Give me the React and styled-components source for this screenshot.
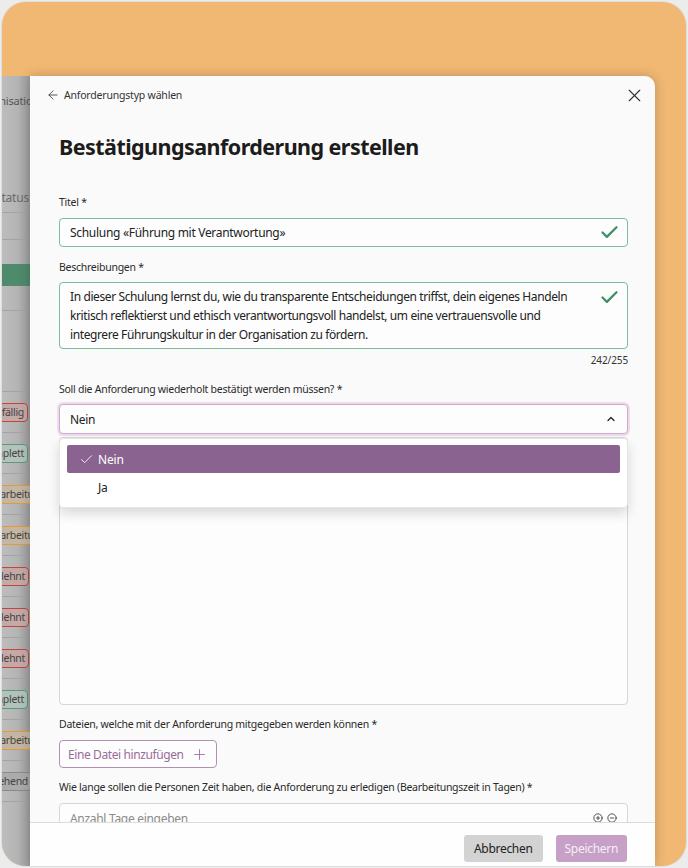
import React from "react";
import styled, { createGlobalStyle } from "styled-components";
import { ArrowLeft, X, Check, ChevronUp, Plus, CirclePlus, CircleMinus } from "lucide-react";

const GlobalStyle = createGlobalStyle`
  * { box-sizing: border-box; }
  body {
    margin: 0;
    background: #ececec;
    font-family: "Noto Sans", "Open Sans", sans-serif;
    font-stretch: semi-condensed;
    color: #222;
  }
`;

const Page = styled.div`
  padding: 2px;
  height: 868px;
`;

const Card = styled.div`
  height: 864px;
  border-radius: 24px;
  background: #f1b873;
  overflow: hidden;
  padding-top: 74px;
  box-shadow: 0 0 0 1px #dedede;
`;

const Screen = styled.div`
  display: flex;
  height: 100%;
`;

const Strip = styled.div`
  width: 28px;
  flex-shrink: 0;
  overflow: hidden;
  background: linear-gradient(to right, #bdbdbd 0%, #b4b4b4 55%, #9d9d9d 100%);
  display: flex;
  flex-direction: column;
  color: #555;
  white-space: nowrap;
`;

const StripRow = styled.div`
  height: ${(p) => p.h}px;
  flex-shrink: 0;
  display: flex;
  align-items: ${(p) => p.align || "center"};
  justify-content: flex-end;
  padding-top: ${(p) => p.pt || 0}px;
  border-bottom: ${(p) => (p.line ? "1px solid #a3a3a3" : "none")};
`;

const StripText = styled.span`
  margin-right: ${(p) => p.mr || 0}px;
  font-size: ${(p) => p.size || 11}px;
  letter-spacing: -0.2px;
  color: ${(p) => p.color || "#555"};
`;

const GreenBar = styled.div`
  width: 100%;
  height: 22px;
  margin-top: 24px;
  background: #4f8a6c;
`;

const Tag = styled.span`
  height: 19px;
  line-height: 17px;
  padding: 0 3px;
  border-radius: 4px;
  border: 1px solid ${(p) => p.border};
  background: ${(p) => p.bg};
  color: #444;
  font-size: 10.5px;
  letter-spacing: -0.3px;
  margin-right: ${(p) => p.mr}px;
`;

const Modal = styled.div`
  width: 625px;
  flex-shrink: 0;
  display: flex;
  flex-direction: column;
  background: #fafafa;
  border-top-right-radius: 10px;
  box-shadow: 0 0 12px rgba(0, 0, 0, 0.22);
  position: relative;
`;

const Header = styled.div`
  height: 38px;
  flex-shrink: 0;
  display: flex;
  align-items: center;
  justify-content: space-between;
  padding: 0 10px 0 16px;
`;

const BackLink = styled.div`
  display: flex;
  align-items: center;
  gap: 4px;
  font-size: 10.5px;
  letter-spacing: -0.2px;
  color: #333;
`;

const Body = styled.div`
  flex: 1;
  overflow: hidden;
  padding: 0 27px 0 29px;
  display: flex;
  flex-direction: column;
`;

const Title = styled.h1`
  margin: 18px 0 0;
  font-size: 21.5px;
  line-height: 30px;
  font-weight: 700;
  letter-spacing: -0.55px;
  color: #1c1c1c;
`;

const Field = styled.div`
  margin-top: ${(p) => p.mt}px;
  display: flex;
  flex-direction: column;
  gap: ${(p) => p.gap || 8}px;
  position: relative;
`;

const Label = styled.label`
  font-size: 10.5px;
  line-height: 16px;
  letter-spacing: -0.26px;
  color: #2a2a2a;
`;

const Box = styled.div`
  border: 1px solid ${(p) => p.border || "#d6d6d6"};
  border-radius: 4px;
  background: #fdfdfd;
  display: flex;
  align-items: ${(p) => p.align || "center"};
  justify-content: space-between;
  height: ${(p) => (p.h ? `${p.h}px` : "auto")};
  padding: ${(p) => p.pad || "0 7px 0 10px"};
  font-size: 12px;
  line-height: 19px;
  letter-spacing: -0.3px;
  color: ${(p) => p.color || "#222"};
  box-shadow: ${(p) => p.ring || "none"};
  flex-shrink: 0;
`;

const Lines = styled.div`
  white-space: nowrap;
  letter-spacing: -0.4px;
`;

const Counter = styled.div`
  margin-top: 4px;
  text-align: right;
  font-size: 10px;
  line-height: 14px;
  letter-spacing: -0.1px;
  color: #333;
`;

const Menu = styled.div`
  position: absolute;
  top: calc(100% + 4px);
  left: 0;
  right: 0;
  height: 70px;
  padding: 6px 7px 8px;
  background: #fff;
  border: 1px solid #e6e6e6;
  border-radius: 4px;
  box-shadow: 0 6px 12px rgba(0, 0, 0, 0.14);
  z-index: 2;
`;

const Option = styled.div`
  height: 28px;
  display: flex;
  align-items: center;
  gap: 4px;
  padding-left: ${(p) => (p.selected ? 12 : 31)}px;
  border-radius: 2px;
  background: ${(p) => (p.selected ? "#8b6390" : "transparent")};
  color: ${(p) => (p.selected ? "#fff" : "#222")};
  font-size: 12px;
  letter-spacing: -0.2px;
`;

const AddButton = styled.button`
  align-self: flex-start;
  height: 28px;
  display: flex;
  align-items: center;
  gap: 7px;
  padding: 0 8px;
  background: #fdfdfd;
  border: 1px solid #b48fb5;
  border-radius: 4px;
  color: #9a6c9c;
  font-family: inherit;
  font-stretch: inherit;
  font-size: 12px;
  letter-spacing: -0.4px;
`;

const Steppers = styled.div`
  display: flex;
  gap: 4px;
  color: #333;
`;

const Footer = styled.div`
  height: 44px;
  flex-shrink: 0;
  border-top: 1px solid #dcdcdc;
  background: #fefefe;
  display: flex;
  justify-content: flex-end;
  gap: 13px;
  padding: 12px 28px 0;
`;

const FooterButton = styled.button`
  height: 27px;
  padding: 0 ${(p) => (p.primary ? 9 : 10)}px;
  border: none;
  border-radius: 3px;
  background: ${(p) => (p.primary ? "#c6a0c6" : "#d3d3d3")};
  color: ${(p) => (p.primary ? "#f6eef6" : "#222")};
  font-family: inherit;
  font-stretch: inherit;
  font-size: 12px;
  letter-spacing: -0.3px;
`;

const tags = [
  { t: "Überfällig", border: "#c0473f", bg: "#c4a9a6", mr: 2 },
  { t: "Komplett", border: "#5a9a78", bg: "#b3c2ba", mr: 2 },
  { t: "In Bearbeitung", border: "#e49a3c", bg: "#c4b6a2", mr: -20 },
  { t: "In Bearbeitung", border: "#e49a3c", bg: "#c4b6a2", mr: -20 },
  { t: "Abgelehnt", border: "#c0473f", bg: "#c4a9a6", mr: 1 },
  { t: "Abgelehnt", border: "#c0473f", bg: "#c4a9a6", mr: 1 },
  { t: "Abgelehnt", border: "#c0473f", bg: "#c4a9a6", mr: 1 },
  { t: "Komplett", border: "#5a9a78", bg: "#b3c2ba", mr: 2 },
  { t: "In Bearbeitung", border: "#e49a3c", bg: "#c4b6a2", mr: -20 },
  { t: "Ausstehend", border: "#8a8a8a", bg: "#ababab", mr: -2 },
];

const App = () => {
  return (
    <Page>
      <GlobalStyle />
      <Card>
        <Screen>
          <Strip>
            <StripRow h={107} align="flex-start" pt={17}>
              <StripText mr={-9}>Organisation</StripText>
            </StripRow>
            <StripRow h={30} line>
              <StripText mr={1} size={12} color="#6a6a6a">Status</StripText>
            </StripRow>
            <StripRow h={27} line />
            <StripRow h={71} line align="flex-start">
              <GreenBar />
            </StripRow>
            <StripRow h={81} line />
            {tags.map((tag, i) => (
              <StripRow key={i} h={41} line>
                <Tag border={tag.border} bg={tag.bg} mr={tag.mr}>
                  {tag.t}
                </Tag>
              </StripRow>
            ))}
          </Strip>

          <Modal>
            <Header>
              <BackLink>
                <ArrowLeft size={14} strokeWidth={1.4} />
                Anforderungstyp wählen
              </BackLink>
              <X size={21} strokeWidth={1.3} color="#333" />
            </Header>

            <Body>
              <Title>Bestätigungsanforderung erstellen</Title>

              <Field mt={32}>
                <Label>Titel *</Label>
                <Box border="#7dbb9a" h={29}>
                  Schulung «Führung mit Verantwortung»
                  <Check size={21} strokeWidth={2.6} color="#3f8f66" />
                </Box>
              </Field>

              <Field mt={12} gap={7}>
                <Label>Beschreibungen *</Label>
                <Box border="#7dbb9a" align="flex-start" pad="4px 7px 4px 10px">
                  <Lines>
                    In dieser Schulung lernst du, wie du transparente Entscheidungen triffst, dein eigenes Handeln
                    <br />
                    kritisch reflektierst und ethisch verantwortungsvoll handelst, um eine vertrauensvolle und
                    <br />
                    integrere Führungskultur in der Organisation zu fördern.
                  </Lines>
                  <Check size={21} strokeWidth={2.6} color="#3f8f66" style={{ flexShrink: 0 }} />
                </Box>
              </Field>
              <Counter>242/255</Counter>

              <Field mt={14} gap={7}>
                <Label>Soll die Anforderung wiederholt bestätigt werden müssen? *</Label>
                <div style={{ position: "relative" }}>
                  <Box border="#cfaacf" h={30} ring="0 0 0 2px #ecdcec" pad="0 10px 0 10px">
                    Nein
                    <ChevronUp size={12} strokeWidth={2.5} />
                  </Box>
                  <Menu>
                    <Option selected>
                      <Check size={15} strokeWidth={1.4} />
                      Nein
                    </Option>
                    <Option>Ja</Option>
                  </Menu>
                </div>
              </Field>

              <Field mt={3}>
                <Box h={268} />
              </Field>

              <Field mt={11}>
                <Label>Dateien, welche mit der Anforderung mitgegeben werden können *</Label>
                <AddButton>
                  Eine Datei hinzufügen
                  <Plus size={17} strokeWidth={1.2} />
                </AddButton>
              </Field>

              <Field mt={11}>
                <Label>
                  Wie lange sollen die Personen Zeit haben, die Anforderung zu erledigen (Bearbeitungszeit in Tagen) *
                </Label>
                <Box h={30} color="#8a8a8a" pad="0 10px 0 10px">
                  Anzahl Tage eingeben
                  <Steppers>
                    <CirclePlus size={10} strokeWidth={2} />
                    <CircleMinus size={10} strokeWidth={2} />
                  </Steppers>
                </Box>
              </Field>
            </Body>

            <Footer>
              <FooterButton>Abbrechen</FooterButton>
              <FooterButton primary>Speichern</FooterButton>
            </Footer>
          </Modal>
        </Screen>
      </Card>
    </Page>
  );
};

export default App;
